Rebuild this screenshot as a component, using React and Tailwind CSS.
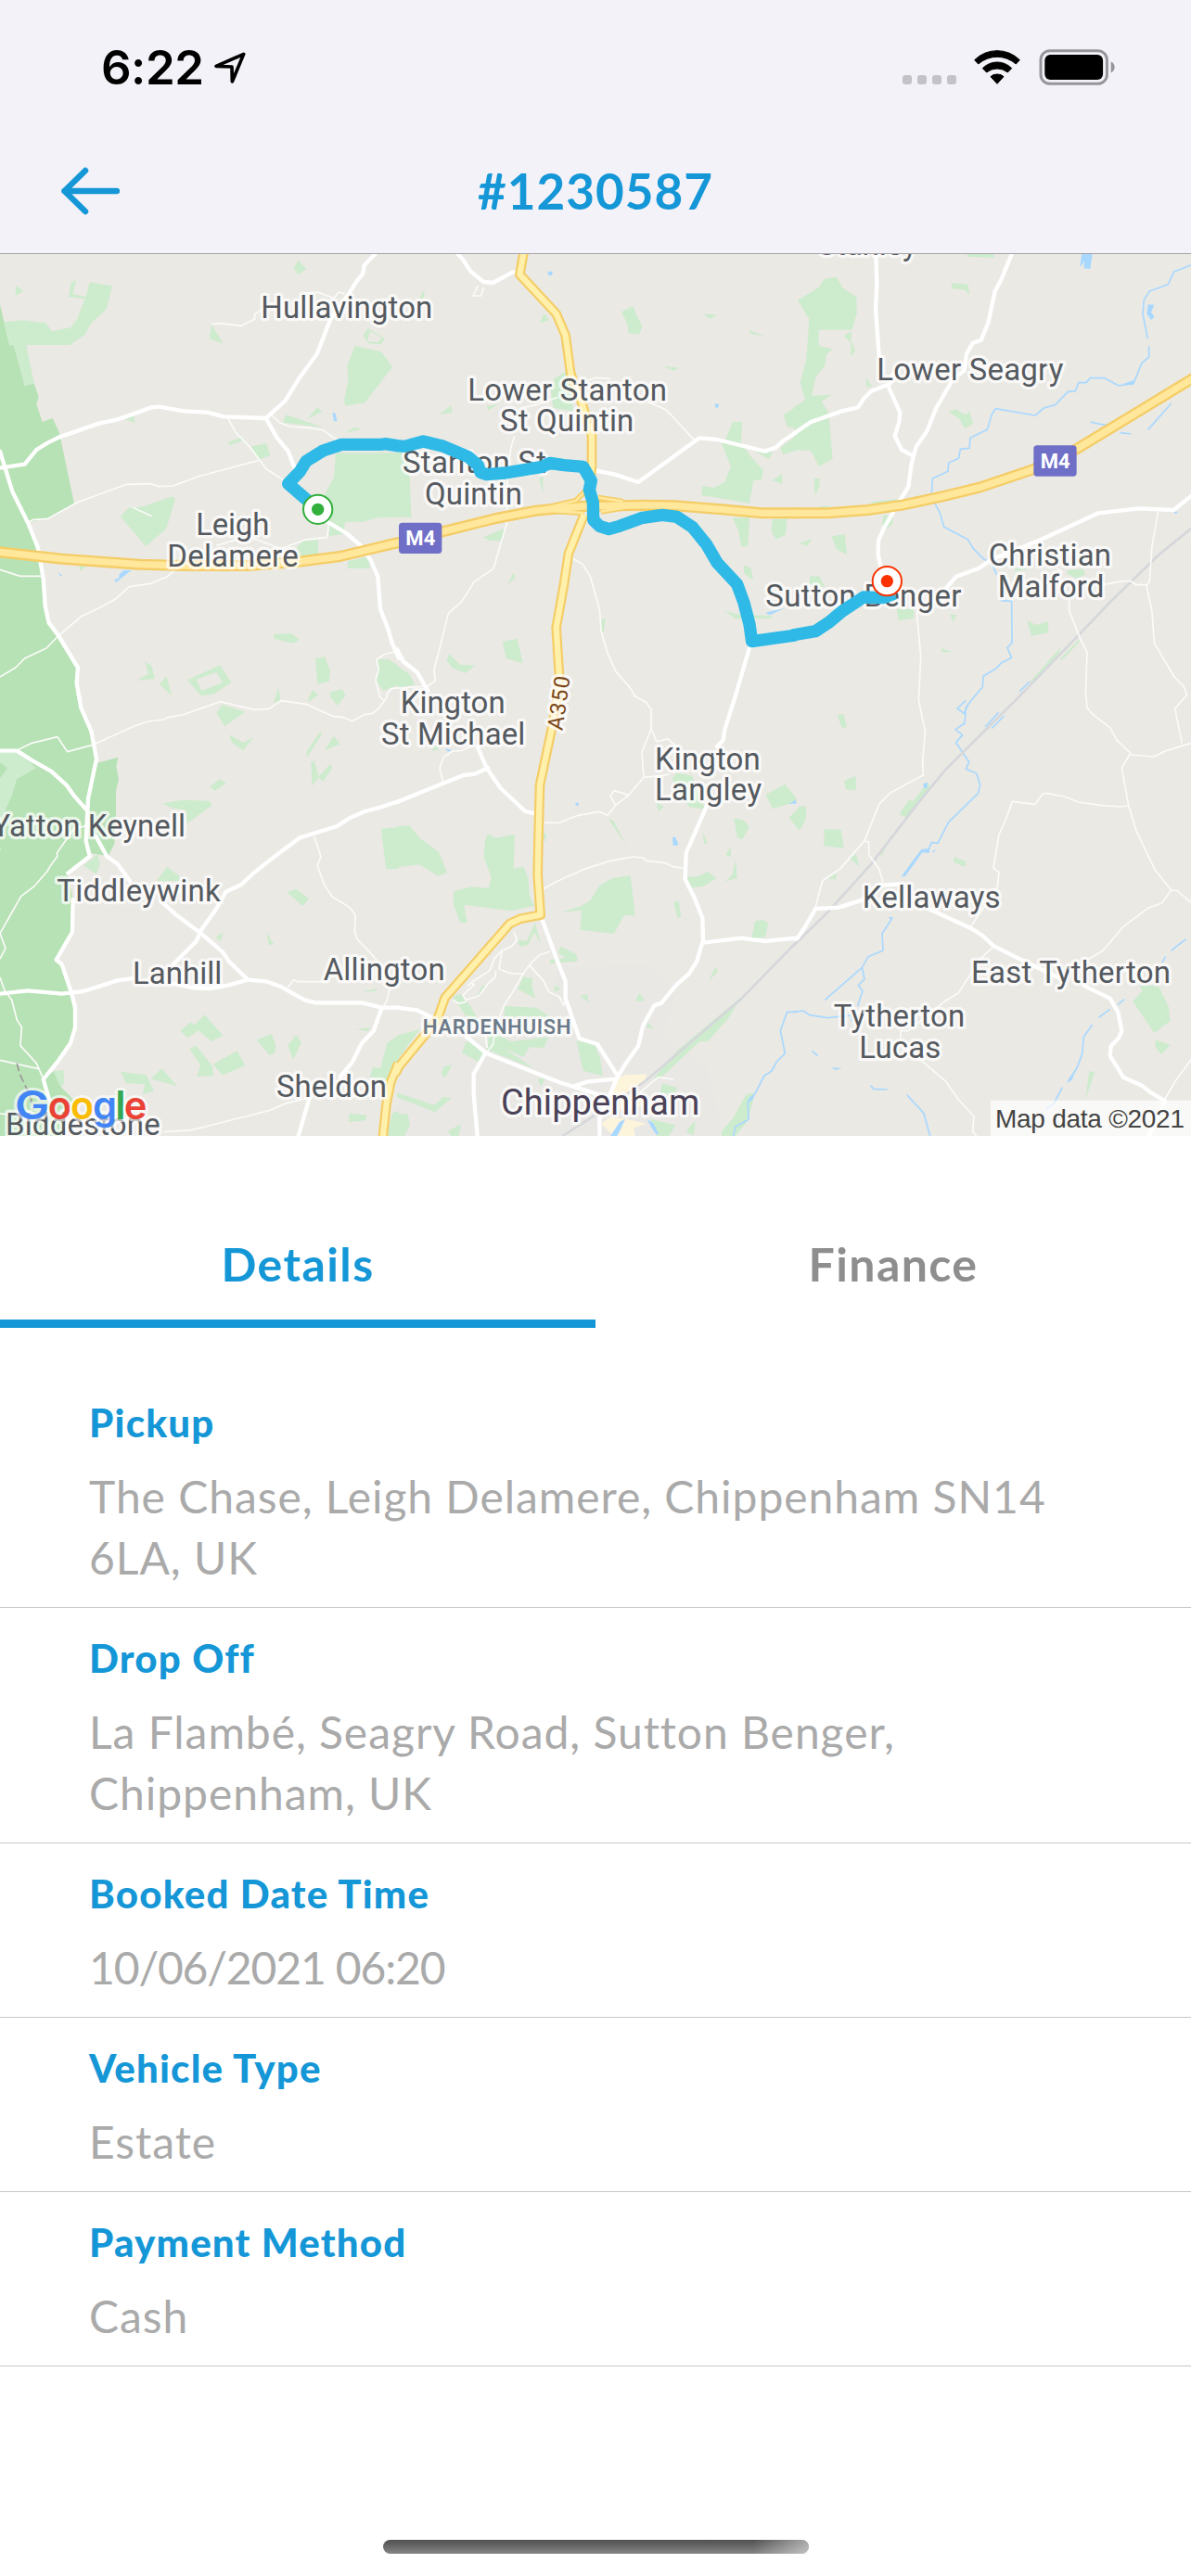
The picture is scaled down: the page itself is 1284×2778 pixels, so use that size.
import React, { useState } from "react";

// Map drawing units: three per pixel, split in six tiles
const TILES = {
  nw: "translate(0 0)",
  n: "translate(1284 0)",
  ne: "translate(2568 0)",
  sw: "translate(0 1440)",
  s: "translate(1284 1440)",
  se: "translate(2568 1440)",
};

const forest = {
  nw: "M0 175L30 305L45 308L80 438L110 430L125 475L118 498L137 555L170 543L192 590L240 820L155 868L92 880L125 960L138 1050L150 1150L160 1205L190 1250L252 1350L250 1441H0Z",
  sw: "M0 -1H250L262 40L295 110L310 220L382 200L376 230L384 270L375 310L375 380L370 480L350 520L290 510L290 520L220 575L236 660L234 760L182 855L200 870L230 960L245 1070L228 1130L140 1240L175 1215L200 1270L235 1305L200 1425H0Z",
};

const parks = {
  nw: "M12 232L75 226L148 235L168 262L228 250L248 225L275 157L222 150L230 105L246 95L236 142L278 150L290 103L363 115L345 190L295 235L275 272L226 306H85L110 430L80 438L45 308L30 305ZM52 113L76 131L50 147ZM965 33L991 61L963 79L950 55ZM684 240L722 302L678 286ZM1190 252L1244 284L1234 304L1192 301L1174 276ZM1148 309L1232 327L1269 377L1180 493L1117 503L1113 485L1127 420L1123 375ZM404 547L433 536L437 557ZM925 532L1045 572L915 557ZM995 545L1026 508L1042 521ZM1118 590L1145 572L1172 578ZM738 620L780 606L785 615L742 631ZM812 634L862 625L874 662L838 679ZM1086 655H1290V864L1225 864L1172 878L1116 878L1112 917L1064 925L1066 880L1050 790L1080 735ZM390 862L415 834L465 829L555 796L567 803L538 900L472 958ZM960 960L985 937L1029 937V985L960 990ZM1125 1005L1195 990V1029H1125ZM256 1020L283 1020L258 1037ZM885 1242L942 1239L969 1260L947 1271L886 1256ZM1020 1321L1050 1314L1068 1360L1064 1395L1027 1403ZM1222 1324L1255 1322L1290 1345V1405L1240 1425L1218 1395ZM606 1390L712 1342L748 1398L690 1436L650 1441ZM442 1391L480 1370L470 1331L490 1343L501 1386ZM516 1405L538 1377L556 1441ZM893 1441L900 1412L905 1441ZM1002 1441L1012 1422L1030 1441ZM1065 1430L1105 1420L1118 1441H1070Z",
  n: "M0 655L38 650L46 865L0 862ZM70 158L90 125L85 158ZM475 203L492 225L463 236ZM726 199L763 180L779 220L793 246L783 272L748 267L746 240ZM990 206L1035 208L1013 221ZM1140 259L1192 279L1142 269ZM862 374L912 380L895 390ZM508 415L545 393L560 410L570 520L505 510L498 455ZM138 530L174 502L180 525ZM290 505L330 495L294 518ZM1086 555H1117L1112 620L1145 668L1185 712L1178 742L1153 745L1140 818L985 791L987 762L1025 768L1060 750L1080 700L1050 625L1065 605ZM1250 530L1290 508V575L1262 570ZM1240 640L1290 600V648L1248 660ZM1160 650L1216 652L1202 675ZM1213 744L1246 723V755ZM460 740L472 730V783ZM278 929L345 900L340 940L300 938ZM1085 865L1140 865L1135 958L1113 957L1104 905ZM1215 870L1262 868L1256 920L1225 935L1211 908ZM376 1043L383 1057L357 1085ZM1122 1018L1145 1028L1152 1068L1122 1045ZM1060 1166L1110 1180L1214 1182L1210 1190L1095 1192ZM662 1195L674 1192L667 1240L658 1222ZM342 1266L389 1256L407 1336L352 1320ZM168 1305L203 1340L253 1343L221 1367L178 1350L161 1325ZM0 1345L40 1370L58 1405L0 1416Z",
  ne: "M12 161L80 120L98 92L137 86L158 122L202 151L203 205L187 257H80V308L126 320L105 335L100 372L70 410L57 470L121 467L89 490L112 525L125 674L80 699L55 648L0 646V508L36 483L20 428L40 352L49 222ZM187 262L184 290L198 325L184 343V300L162 276ZM559 12H645L648 24L562 20ZM509 105L563 111L568 143L552 127L512 124ZM232 412L253 440H234ZM500 522L524 514L554 532L567 522L579 560L553 577L535 545ZM65 738H83L82 765L68 791ZM17 948L58 933L43 956ZM122 925L164 919L171 983L138 967ZM255 812L340 805L330 815L250 825ZM290 855L320 862L318 885L298 902L285 890ZM85 828L125 826L90 838ZM52 1054L82 1055L100 1090L50 1080ZM332 1160H388L387 1190L338 1197ZM505 1178L526 1180L515 1203ZM476 1288L515 1300L478 1300ZM712 1030L765 1030L718 1038ZM885 1035L935 1030L942 1048L915 1062L883 1045ZM754 1198L785 1212L822 1200V1237L768 1247ZM764 1395L862 1285L860 1300L770 1398ZM862 1320L925 1256L922 1268L864 1328Z",
  sw: "M0 186H60L118 235L55 270L40 320L20 365L0 440V268L24 235L0 217ZM0 495L6 492L0 505ZM550 0H558ZM718 30L793 53L727 99L700 57ZM742 127L786 152L820 135L787 178L748 150ZM1035 118L1042 124L992 202L993 180ZM1079 131L1100 157L1050 178ZM1015 210L1031 262L1070 220L1074 235L1045 278L1030 265L1010 293L1006 218ZM885 22L893 0H907L904 20ZM994 22L1002 0L1028 0ZM1066 0H1118L1090 33ZM678 295L713 270L731 285L694 308ZM526 349L590 338L677 341L686 355L605 415L595 370L558 365ZM270 550L316 514L323 545L312 578ZM510 595L540 555L580 585V600H510ZM928 637L958 626L999 657L980 681ZM1232 432L1290 426V560L1249 562ZM698 780L722 767L712 796ZM861 765L885 805L870 807ZM1170 958L1218 948L1216 957ZM1152 1080L1197 1074L1190 1086ZM583 1085L617 1057L629 1066L662 1033L721 1100L684 1119L642 1084L608 1108ZM613 1143L635 1133L687 1200L690 1231L636 1233L649 1197ZM689 1193L767 1150L793 1198L719 1228ZM830 1114L878 1095L892 1130L889 1155L872 1165ZM957 1098L975 1122L948 1178L931 1132ZM390 1217L472 1228L498 1279L462 1290L468 1258L407 1254ZM488 1240L523 1207L573 1264ZM172 1216L206 1213L207 1258L195 1265ZM1252 1125L1290 1098V1190L1260 1250L1197 1235L1205 1202L1230 1207ZM1270 1350L1290 1345V1425H1250ZM1130 1352L1185 1358L1183 1375L1129 1380Z",
  s: "M0 424L40 420L75 463L135 507L162 573L133 584L72 547L0 556ZM293 448L318 461L381 449L377 561L409 554L424 592L430 655L445 680L369 697L217 677L226 735H205L182 675L184 634L240 619L296 624L305 587L280 522L285 470ZM470 450L483 445L480 478ZM683 398L700 405L742 485ZM1192 322L1255 287L1290 330L1290 345L1215 367L1205 345ZM1268 395L1290 372V424ZM1090 397L1120 403L1140 425L1117 465L1101 460ZM988 440L1005 480L993 480ZM1062 515L1080 490V522ZM1095 530L1100 590L1062 602L1085 580ZM935 588L977 585L1005 570L1033 592L990 618L955 622ZM905 250L955 260L980 340L1000 370L945 360L890 270ZM840 345L863 360L845 376ZM112 180L125 162L135 175ZM655 615L695 592L755 582L770 712L735 710L702 771L592 758L597 695L530 702L595 682L625 663ZM895 668L911 665L919 715L908 720ZM1158 730L1180 726L1200 735L1192 780L1146 790ZM446 735L465 805L444 765L423 808L397 812L390 790L420 795ZM530 813L580 837L583 860L495 867V855L545 850L520 830ZM408 910L438 915L437 945L448 980L391 950ZM512 937L529 950L508 960ZM592 972L615 966L620 993ZM784 962L801 988L770 990ZM1030 878L1038 892L1007 925ZM268 970L290 938L275 940L260 972ZM180 975L205 965L238 1005L275 1070L225 1040ZM350 1005L450 1010L495 1040H345ZM0 1100L75 1080L0 1180ZM210 1155L225 1118L285 1145L265 1187ZM300 1085L370 1120L490 1105L475 1140L430 1138L408 1170L345 1140L445 1208L290 1145ZM580 1117L640 1127L658 1180L665 1230L602 1214ZM810 1055L831 1080L808 1074ZM910 1145L1110 978L1075 1040L1005 1120L980 1118L850 1240L830 1238ZM143 1225L152 1200L178 1195L155 1237ZM0 1285L120 1325L150 1298L175 1303L123 1348L0 1300ZM0 1352L35 1355L42 1390L25 1425H0ZM165 1410L207 1386L200 1425H175ZM455 1240L480 1240L465 1265ZM860 1255L908 1270L895 1290L850 1285ZM820 1370L900 1390L880 1425H840ZM935 1410L965 1375L960 1425ZM1050 1410L1085 1370L1130 1290L1158 1285L1135 1375L1095 1425H1050Z",
  se: "M0 320L10 340L0 345ZM0 380L20 358L40 360L38 400L18 438L0 415ZM140 62L160 60L171 102L155 106ZM162 275L200 261V305H168ZM98 432L152 434L161 495L97 486ZM182 528L200 512L211 553ZM110 593L137 575V595ZM340 385L372 338L385 342L432 282L440 295L392 360L362 394ZM519 522L557 538L552 554L516 539ZM280 515L302 480L285 518ZM1118 938H1178L1212 1007L1216 1053L1165 1092L1096 990L1127 955ZM1168 1114L1216 1130L1188 1162L1170 1140ZM955 1214L972 1220L943 1305Z",
};

const urban =
  "M520 860L560 880L800 870L900 960L860 1110L1000 1200L1060 1425H0V1230L140 1110L300 1130L500 1000Z";

const town =
  "M715 1240L735 1228L808 1225L800 1250L765 1270L745 1300L690 1290ZM660 1385L690 1365L740 1370L805 1385L765 1400L770 1425H700ZM720 1300L800 1290L790 1330L720 1340Z";

const rails = {
  ne: "M1290 895L1180 985L1030 1130L925 1240L730 1442",
  s: "M1290 800L1115 980L900 1165L800 1250L700 1320L535 1425",
  se: "M734 -2L490 240L400 350L250 545L110 700L-4 812",
};

const rivers = {
  ne: "M1290 45L1228 70L1210 110L1150 132L1132 160L1128 205L1144 285M1148 310L1148 345L1125 365L1098 430L1050 438L1005 413H958L945 428H920L910 455L885 458L845 500L808 510L780 534L652 512L640 530L625 580L570 607L567 640L538 643L533 672L500 688L498 715L448 738L445 785L458 822L472 850L485 895L562 935L580 965L615 1000L640 1010L655 1050M668 1133L704 1135L705 1270L690 1285L704 1318L670 1335L655 1352L612 1378L610 1412L585 1442M958 555L990 562L1015 566M1055 590L1090 594M1145 580L1220 495M730 1427L762 1395",
  s: "M1290 1024L1262 1024L1240 1085L1255 1158L1228 1185L1212 1215L1188 1230L1158 1288L1135 1315L1137 1372L1095 1395L1088 1425",
  se: "M586 0L556 38L552 90L522 110L545 128L524 152L566 215L556 238L590 252L602 290L596 316L500 410L465 478L445 475L435 500L415 502L385 540L350 586M556 16L528 42L550 58L566 24M618 102L662 55M640 106L680 66M318 720L285 770L288 825L240 845L220 880L100 985M220 880L228 918L208 938L222 955L206 1005M0 1024L30 1020L50 1034L110 1043L185 1035L188 1055M1268 788L1220 825M1202 845L1190 865M1068 983L1048 1000M1022 1015L985 1042M965 1065L937 1105L932 1160L915 1205L885 1250M868 1268L840 1320L815 1340M58 1150L77 1166M248 1262L258 1273L302 1275M365 1292L420 1352L440 1425",
};

const lakes = {
  nw: "M1075 525L1085 527L1090 553L1080 553ZM400 1035L425 1035L405 1050L375 1075L370 1066L385 1060L385 1050ZM188 1043L201 1050L196 1056Z",
  n: "M487 68L504 68L500 82L490 80ZM1028 496L1041 498L1040 508L1030 509ZM1192 1172L1255 1157L1205 1180Z",
  ne: "M930 12H965L958 60L937 58L940 35L925 55ZM1145 175L1165 176L1155 200L1166 215L1155 225L1141 205ZM1065 432L1100 420L1096 436ZM1225 845L1243 845L1235 852Z",
  s: "M891 458L900 458L911 483L893 486ZM575 350L588 345L585 360ZM155 172L178 176L165 182ZM1268 350L1290 338V350ZM690 1425L720 1380L738 1370L725 1400L712 1425ZM808 1370L830 1385L847 1420H838L825 1400ZM1140 1300L1158 1290L1150 1308L1135 1318Z",
  se: "M418 285L432 282L430 300L420 300ZM120 1204L155 1206L135 1212ZM305 718L322 717L312 724ZM0 340L10 348H0ZM350 586L380 540L412 498L438 495L438 510L415 508L385 550L360 584ZM885 1250L915 1205L898 1245ZM448 503L458 498L452 510Z",
};

const lanes = {
  nw: "M686 238L710 236L780 244L824 222L824 206L850 190M985 138L1030 136L1080 155L1095 135L1115 140M878 532L905 558L940 570L1000 574L1045 582L1090 614M738 545L762 588L810 638L862 708L925 748M92 880L105 872L155 868L250 815L410 757L485 755L515 764L560 762L640 732L835 680M1064 880L1058 928L985 937L910 965L800 925L700 955M0 1033L65 1054H135M0 1380L50 1350L80 1320L150 1287L188 1248L262 1185L320 1157L375 1127L418 1088L488 1078L542 1055L570 1030M1290 1295L1240 1308L1218 1325L1225 1355L1215 1390L1228 1441M1290 1415L1265 1418L1248 1441M430 832L490 860",
  n: "M380 600L368 640L358 720L355 885L335 950L312 1030L250 1072L210 1135L166 1175L140 1280L120 1355L124 1392L100 1410L0 1416M400 510L450 500L520 475M600 430L640 412L690 415M810 490L870 515L960 612M565 995L600 1015L625 1055L655 1160L660 1230L680 1300L708 1363L750 1410L770 1441M262 115L246 147H272L280 120",
  ne: "M397 1170L410 1315L404 1441M890 1130V1165L928 1262L948 1300L943 1441M1178 845L1158 955L1150 1070L1140 1085L1158 1170L1165 1270L1230 1380L1260 1410L1272 1441M1000 1082L1060 1070L1090 1070L1105 1082H1142M850 1030L870 1040",
  sw: "M60 175L100 155L186 134L218 182L300 160L440 97L480 84L530 78L545 70L590 63L712 20L785 37L825 46L870 43L908 17L990 28L1075 67L1108 70L1140 83L1178 62L1205 58L1225 42L1255 0M1225 0L1240 15M290 420L240 430L184 510L186 520L165 548L152 570L110 618L68 650L35 708L0 770M0 770L18 818L0 852M0 912L15 955L38 985L55 1050L70 1073L66 1133L118 1190L140 1240M0 1180L125 1208M1016 455L1038 522L1026 550L1050 615L1075 652L1130 685L1150 712L1147 762L1155 788L1195 830L1220 858M930 945L950 920L962 926H1060M1260 950L1252 985L1238 1010M530 1412L620 1406L870 1343L930 1318L1000 1302M0 1353L60 1357",
  s: "M765 0L805 22L822 45V108L840 150L875 140L910 170M822 108L792 185L798 265L850 260L880 255M798 265L750 322L702 308L690 325L707 355L682 388L655 376L585 388L525 412H475M707 355L750 322M470 628L510 605L605 562L690 535L762 522L795 525L808 535L865 541L890 553L930 560M148 278L138 235L150 200L180 180L210 178L250 160M378 765L388 792L370 812L340 825L330 885L355 895L378 900H408M320 890L318 910L292 935L265 972L222 985L213 970L250 935L240 930L228 940M340 825L315 850L300 890L235 932M495 828L460 840L428 872L408 900L380 950L345 1005L320 1070L310 1130L290 1155M428 872L475 925L492 960L525 975L540 1003L545 985M180 985L200 997L225 990M785 1285L845 1235L895 1242M285 1095L292 1140",
  se: "M403 0L404 20L424 115L416 215L418 258L310 316L275 352L228 470L150 560L92 600L68 690M228 470L242 475V515L275 560L288 605M945 0L948 40L965 60L1022 104L1045 145L1088 186L1060 235L1082 355L1108 440L1168 565L1220 630L1240 632L1284 670M1088 192L1165 198L1205 178L1284 155M1270 0L1232 42L1255 155M1082 357L1055 360L990 355L920 345L875 327L815 316L802 320L780 352L706 343L685 402L663 450L645 558L663 572L658 620L570 750M1220 630L1190 672L1145 688L1065 748L1000 825L950 855M642 815L605 850L532 962L490 988L400 1060L370 1085H345V1110M405 1175L492 1250L530 1305L582 1362L578 1410L590 1425M1200 1305L1235 1245L1290 1170",
};

const roads = {
  nw: "M1220 5L1178 48L1174 75L1155 98L1130 138L1068 225L1025 335L970 410L922 487L860 543L725 538L670 524L595 520L515 506L490 508L380 547L320 560L190 605L155 622L118 645L80 692L0 704M860 543L895 605L932 650L955 710M1062 880L1120 915L1172 960L1200 1005L1222 1055L1230 1160L1255 1225L1268 1270L1290 1320M0 650L40 780L92 885L122 960L140 1060L146 1150L158 1205L190 1248L252 1350L248 1400L256 1445",
  n: "M190 5L212 28L238 68L280 102L310 105L375 70L400 72M640 712L705 725L780 750L978 607L1035 612L1190 650L1225 638L1250 615L1290 590M0 1290L20 1330L65 1365L100 1425M1140 1285L1095 1440",
  ne: "M0 592L55 555L155 520L207 508L225 480L250 455L310 432L320 400M265 12L268 110L264 190L275 340M705 10L670 95L650 132L628 235L605 290L578 300L558 335L550 390L515 415L460 510L430 585L395 635L380 690L370 765L345 805L290 900L273 940L272 985L282 1030M305 440L343 525L340 555L326 600L348 645L380 662M490 1095L525 1055L595 1030L640 1000L800 935L985 850L1115 835L1228 840L1290 790",
  sw: "M0 179H55L100 208L165 245L215 290L240 325L280 370M254 -5L262 40L295 115L312 205L285 335L278 470L290 520L220 575M236 660L234 765L182 855L200 870L232 965L243 1010V1075L228 1125L190 1180L140 1242L160 1310M310 455L345 520L380 545L420 600M520 665L570 710L648 768L720 830L740 860L800 918M0 965L90 955L200 965L270 957L380 922L430 915M550 930L620 945L680 948L740 937L800 920L860 925L910 943L985 985L1020 994H1170L1235 1010H1290M1290 342L1230 362L1180 375L1130 397L1090 423L970 460L870 535L820 575L780 612L730 635L700 690L650 760L635 795L560 870M1235 1010L1208 1085L1170 1125L1140 1185L1100 1235M1000 1305L965 1425",
  s: "M0 345L110 300L215 258L250 254L295 235M260 165L290 235L335 300L415 375L450 382M1095 0L1060 110L1055 145L1035 165M1005 350L935 510L932 595L960 650L988 720L990 790L970 860L945 900L905 935L855 995L832 1003L795 1070L780 1135L740 1190L710 1240L655 1370V1420M988 800L1115 785L1190 795L1290 785M470 725L515 850L545 925V980L590 1110L648 1128L710 1225M0 1010L65 1018L120 1045M225 1105L290 1158L440 1218L530 1253L650 1290M570 1265L615 1250L710 1240M285 1158L248 1225V1290L260 1425",
  se: "M0 787H10L35 750L70 690L145 686L220 662L270 615L340 610M435 690L570 752L610 777L645 810L720 848L860 915M940 940L1022 980L1048 1025L1060 1085L1050 1108L1025 1135L1022 1165L1065 1235L1125 1262L1150 1282L1200 1312L1148 1425",
};

const motorway = {
  nw: "M-10 975L200 998L450 1016L600 1020L800 1020L960 1008L1100 990L1284 946",
  n: "M-6 948L180 902L320 867L450 842L600 828L800 824L900 826L1050 838L1180 850H1290",
  ne: "M-6 850H110L240 840L350 824L480 796L600 767L770 710L915 642L1100 530L1300 408",
};

const trunk = {
  n: "M411 0L397 78L515 205L545 275L562 400L600 500L630 600V700L622 770M605 855L555 980L540 1080L515 1220L525 1380L520 1442",
  s: "M520 -2L500 110L462 290L457 480L455 580L464 710L400 722L365 738L155 978L130 1050L8 1198L-6 1225",
  sw: "M1288 1190L1264 1250L1250 1320L1238 1430",
};

const slips = {
  n: "M610 778L578 810L450 840M650 800L730 812M605 850L580 848L510 844M660 845L740 832",
};

const route = {
  nw: "M1028 838L932 755L970 715L990 682L1045 648L1105 628H1235L1245 626L1284 632",
  n: "M-6 632L25 634L85 618L150 634L230 668L262 695L270 718L290 725L350 720L470 700L495 688L540 695L602 700L628 745L622 775L634 815L635 872L655 892L685 902L720 892L790 866L858 856L905 862L955 895L1000 950L1035 1010L1100 1080L1122 1140L1140 1210L1148 1265L1290 1245",
  ne: "M-6 1245L70 1232L115 1202L155 1168L225 1122L290 1124L325 1110",
};

// [text, left, right, baseline]
const places = [
  ["Hullavington", 848, 1396, 218],
  ["Leigh", 638, 868, 919],
  ["Delamere", 545, 962, 1020],
  ["Lower Stanton", 1517, 2154, 485],
  ["St Quintin", 1621, 2047, 584],
  ["Stanton St", 1306, 1764, 718],
  ["Quintin", 1378, 1686, 820],
  ["Sutton Benger", 2480, 3106, 1150],
  ["Stanley", 2648, 2963, 14],
  ["Lower Seagry", 2840, 3436, 418],
  ["Christian", 3201, 3591, 1018],
  ["Malford", 3231, 3568, 1120],
  ["Kington", 1299, 1631, 1495],
  ["St Michael", 1237, 1696, 1597],
  ["Kington", 2122, 2456, 1678],
  ["Langley", 2122, 2460, 1778],
  ["Yatton Keynell", -22, 597, 1893],
  ["Tiddleywink", 188, 710, 2105],
  ["Lanhill", 433, 715, 2372],
  ["Allington", 1050, 1436, 2360],
  ["Sheldon", 898, 1248, 2738],
  ["Kellaways", 2793, 3233, 2125],
  ["East Tytherton", 3145, 3783, 2367],
  ["Tytherton", 2700, 3118, 2510],
  ["Lucas", 2783, 3040, 2610],
  ["Biddestone", 22, 515, 2860],
];

const google = [
  ["G", 48, 112, "#4285f4"],
  ["o", 155, 76, "#ea4335"],
  ["o", 228, 76, "#fbbc05"],
  ["g", 300, 78, "#4285f4"],
  ["l", 373, 34, "#34a853"],
  ["e", 401, 74, "#ea4335"],
];

const details = [
  {
    label: "Pickup",
    value: ["The Chase, Leigh Delamere, Chippenham SN14", "6LA, UK"],
  },
  {
    label: "Drop Off",
    value: ["La Flambé, Seagry Road, Sutton Benger,", "Chippenham, UK"],
  },
  { label: "Booked Date Time", value: ["10/06/2021 06:20"], numeric: true },
  { label: "Vehicle Type", value: ["Estate"] },
  { label: "Payment Method", value: ["Cash"] },
];

function Layer({ paths, ...props }) {
  return Object.entries(paths).map(([tile, d]) => (
    <path key={tile} d={d} transform={TILES[tile]} {...props} />
  ));
}

function Line(props) {
  return (
    <Layer
      fill="none"
      strokeLinejoin="round"
      strokeLinecap="butt"
      {...props}
    />
  );
}

function Marker({ x, y, color }) {
  return (
    <g>
      <circle cx={x} cy={y} r="47" fill="#fff" stroke={color} strokeWidth="6" />
      <circle cx={x} cy={y} r="20" fill={color} />
    </g>
  );
}

function Shield({ x, y }) {
  return (
    <g>
      <rect x={x} y={y} width="139" height="100" rx="11" fill="#706fc8" />
      <text
        x={x + 22}
        y={y + 74}
        fontSize="66"
        fontWeight="700"
        fill="#fff"
        textLength="96"
      >
        M4
      </text>
    </g>
  );
}

function RouteMap() {
  return (
    <svg
      viewBox="0 12 3852 2853"
      preserveAspectRatio="none"
      className="block h-[951px] w-full bg-[#eae9e4] font-['Roboto',sans-serif]"
    >
      <Layer paths={forest} fill="#b7e2b5" />
      <path d={urban} transform={TILES.s} fill="#e9e8e5" />
      <Layer paths={parks} fill="#cdebcd" />
      {/* Clearings inside the woods */}
      <path
        d="M635 1388L700 1364L720 1398L652 1425ZM1196 262L1236 283L1222 298L1188 294Z"
        fill="#eae9e4"
      />
      <path d={town} transform={TILES.s} fill="#fdf4dc" />
      <Line paths={rivers} stroke="#a9d8ff" strokeWidth="5" />
      <Layer paths={lakes} fill="#a9d8ff" />
      <Line paths={rails} stroke="#d5d7da" strokeWidth="8" />
      <Line paths={lanes} stroke="#fbfbf9" strokeWidth="5" />
      <Line paths={roads} stroke="#fff" strokeWidth="13" strokeLinecap="round" />
      <path
        d="M55 1190L62 1220L78 1255L95 1290L110 1340"
        transform={TILES.sw}
        fill="none"
        stroke="#999"
        strokeWidth="5"
        strokeDasharray="26 12"
      />

      {/* Main roads */}
      <Line paths={slips} stroke="#f5cd66" strokeWidth="18" />
      <Line paths={trunk} stroke="#f5cd66" strokeWidth="32" />
      <Line paths={motorway} stroke="#f5cd66" strokeWidth="36" />
      <Line paths={slips} stroke="#ffe79c" strokeWidth="8" />
      <Line paths={trunk} stroke="#fff0ab" strokeWidth="19" />
      <Line paths={motorway} stroke="#ffe79c" strokeWidth="22" />

      {/* Place names */}
      <g
        fontSize="99"
        fill="#555a60"
        stroke="#ffffff"
        strokeOpacity="0.72"
        strokeWidth="20"
        strokeLinejoin="round"
        paintOrder="stroke"
      >
        {places.map(([name, left, right, y]) => (
          <text
            key={name + y}
            x={left - 4}
            y={y + 2}
            textLength={right - left + 7}
          >
            {name}
          </text>
        ))}
        <text x="1620" y="2797" fontSize="114" fill="#4b4258" textLength="643">
          Chippenham
        </text>
        <text
          x="1367"
          y="2535"
          fontSize="67"
          fontWeight="600"
          fill="#6b7a89"
          textLength="480"
        >
          HARDENHUISH
        </text>
        <text
          transform="translate(1819 1555) rotate(-82)"
          fontSize="70"
          fill="#7a4718"
          textLength="176"
        >
          A350
        </text>
      </g>
      <Shield x={1290} y={881} />
      <Shield x={3343} y={631} />

      {/* Route */}
      <Line paths={route} stroke="#2fb9e6" strokeWidth="40" />
      <Marker x={1028} y={838} color="#31b03c" />
      <Marker x={2869} y={1070} color="#fa3200" />

      {/* Attribution */}
      <g
        fontSize="128"
        fontWeight="600"
        className="font-['Inter',sans-serif]"
        stroke="#fff"
        strokeOpacity="0.6"
        strokeWidth="18"
        strokeLinejoin="round"
        paintOrder="stroke"
      >
        {google.map(([letter, x, width, fill]) => (
          <text
            key={x}
            x={x}
            y="2812"
            fill={fill}
            textLength={width}
            lengthAdjust="spacingAndGlyphs"
          >
            {letter}
          </text>
        ))}
      </g>
      <rect x="3204" y="2750" width="648" height="115" fill="#fff" opacity="0.7" />
      <text
        x="3219"
        y="2838"
        fontSize="84"
        fill="#444"
        textLength="612"
        className="font-['Liberation_Sans',sans-serif]"
      >
        Map data ©2021
      </text>
    </svg>
  );
}

function StatusBar() {
  return (
    <div className="flex h-[138px] items-center justify-between pt-[7px] pr-[82px] pl-[109px]">
      <div className="flex items-center">
        <span className="font-['Inter',sans-serif] text-[51px] leading-[60px] font-semibold tracking-[-0.500px]">
          6:22
        </span>
        <svg viewBox="0 0 102 102" className="ml-[12px] h-[34px] w-[34px]">
          <path
            d="M95 7L6 46L57 48L58 96Z"
            fill="none"
            stroke="#000"
            strokeWidth="11"
            strokeLinejoin="round"
          />
        </svg>
      </div>
      <div className="flex items-center">
        <div className="flex gap-[6px] pt-[27px]">
          {[0, 1, 2, 3].map((dot) => (
            <span
              key={dot}
              className="h-[10px] w-[10px] rounded-[3px] bg-[#c3c2c7]"
            />
          ))}
        </div>
        <svg
          viewBox="302 42 150 111"
          className="ml-[19px] h-[37px] w-[50px]"
          stroke="#000"
          strokeWidth="3"
          strokeLinejoin="round"
        >
          <path d="M304 74Q335 44 377 44Q419 44 450 74L438 87Q410 64 377 64Q344 64 316 87Z" />
          <path d="M330 101Q350 81 377 81Q404 81 424 101L411 114Q396 102 377 102Q358 102 343 114Z" />
          <path d="M356 128Q363 120 377 120Q391 120 398 128L377 151Z" />
        </svg>
        <svg viewBox="510 38 246 118" className="ml-[20px] h-[39px] w-[82px]">
          <rect
            x="515"
            y="43"
            width="216"
            height="108"
            rx="30"
            fill="none"
            stroke="#969599"
            strokeWidth="9"
          />
          <rect x="528" y="56" width="190" height="82" rx="18" />
          <path d="M744 79Q756 85 756 97Q756 109 744 115Z" fill="#969599" />
        </svg>
      </div>
    </div>
  );
}

export default function App() {
  const [tab, setTab] = useState("Details");

  return (
    <div className="flex h-[2778px] w-[1284px] flex-col overflow-hidden bg-white font-['Lato',sans-serif]">
      {/* Header */}
      <div className="h-[274px] border-b border-[#a5a5a8] bg-[#f3f2f8]">
        <StatusBar />
        <div className="grid h-[135px] grid-cols-3 items-center">
          <button className="ml-[66px] w-fit">
            <svg viewBox="0 0 63 52" className="h-[52px] w-[63px]">
              <path
                d="M26 4L3.500 26L26 48M3.500 26H60"
                fill="none"
                stroke="#1597d7"
                strokeWidth="6.500"
                strokeLinecap="round"
                strokeLinejoin="round"
              />
            </svg>
          </button>
          <h1 className="text-center text-[53px] leading-[64px] font-bold tracking-[1px] text-[#1597d7]">
            #1230587
          </h1>
        </div>
      </div>

      <RouteMap />

      {/* Tabs */}
      <div className="mt-[75px] grid h-[132px] grid-cols-2">
        {["Details", "Finance"].map((name) => (
          <button
            key={name}
            onClick={() => setTab(name)}
            className={`border-b-[9px] pt-[4px] text-[50px] font-bold tracking-[1.400px] ${
              tab === name
                ? "border-[#1597d7] text-[#1597d7]"
                : "border-transparent text-[#8e8e8e]"
            }`}
          >
            {name}
          </button>
        ))}
      </div>

      {/* Booking details */}
      <div className="mt-[48px]">
        {details.map((item) => (
          <div
            key={item.label}
            className="border-b border-[#c8c8c8] pt-[27px] pb-[20px] pl-[96px]"
          >
            <h2 className="mb-[19px] text-[42px] leading-[55px] font-black tracking-[1.200px] text-[#1597d7]">
              {item.label}
            </h2>
            {item.value.map((line) => (
              <p
                key={line}
                className={`text-[48px] leading-[66px] text-[#aaaaaa] ${
                  item.numeric ? "tracking-[-1.150px]" : "tracking-[0.950px]"
                }`}
              >
                {line}
              </p>
            ))}
          </div>
        ))}
      </div>

      {/* Home indicator */}
      <div className="mx-auto mt-auto mb-[24px] h-[15px] w-[459px] overflow-hidden rounded-full bg-linear-to-b from-[#505050] to-[#858585]">
        <div className="ml-auto h-full w-[60px] bg-linear-to-r from-transparent to-white/50" />
      </div>
    </div>
  );
}
